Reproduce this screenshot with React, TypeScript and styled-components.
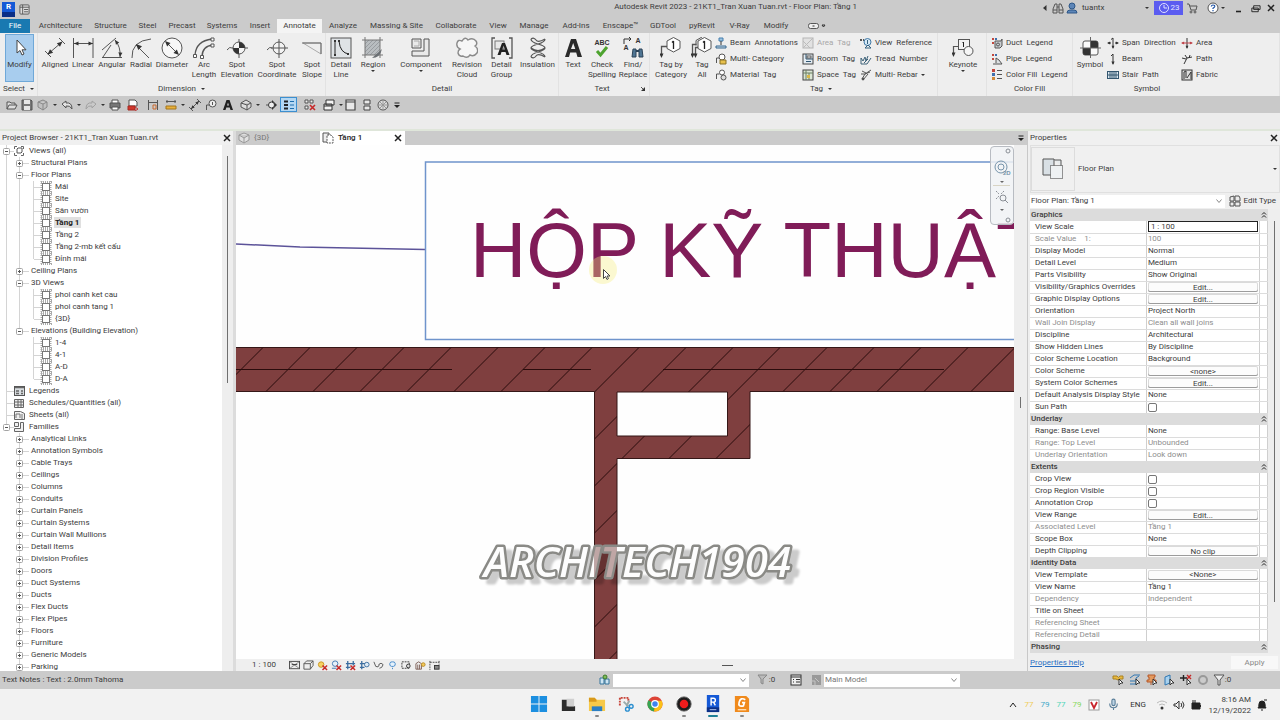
import React from "react";
import styled, { createGlobalStyle, css } from "styled-components";

const GlobalStyle = createGlobalStyle`
  *, *::before, *::after { box-sizing: border-box; }
  html, body { margin: 0; padding: 0; }
  body {
    font-family: Roboto, "Liberation Sans", sans-serif;
    font-size: 8px;
    line-height: 10px;
    color: #3c3c3c;
    background: #ececec;
  }
  button, input, select { font: inherit; color: inherit; margin: 0; padding: 0; }
  ul { list-style: none; margin: 0; padding: 0; }
`;

/* ---------- icons ---------- */

const Svg = styled.svg<{ $w?: number; $h?: number }>`
  display: block;
  flex: none;
  width: ${(p) => p.$w ?? 12}px;
  height: ${(p) => p.$h ?? p.$w ?? 12}px;
  fill: none;
  stroke: #555;
  stroke-width: 1;
`;

const Head = ({ x, y, a, s = 1, c = "#333" }: { x: number; y: number; a: number; s?: number; c?: string }) => (
  <path d="M0 0L-4.5-2v4z" fill={c} stroke="none" transform={`translate(${x} ${y}) rotate(${a}) scale(${s})`} />
);

const hexTag = (
  <>
    <path d="M13.500 .500l6.500 3.500v7.500l-6.500 3.500l-6.500-3.500v-7.500z" fill="#fff" />
    <path d="M13.500 4v8M12 5.500l1.500-1.500" stroke="#222" strokeWidth="1.300" />
  </>
);

const big: Record<string, React.ReactNode> = {
  modify: <path d="M8 3v13l3-2.500 2 4.500 2-1-2-4.200h4z" fill="#fff" stroke="#444" />,
  aligned: <><path d="M4 17L18 5M1 14l6 6M15 1l6 6" /><Head x={3.5} y={17.5} a={139} s={1.2} /><Head x={18.5} y={4.5} a={-41} s={1.2} /></>,
  linear: <><path d="M1.500 1v20M21 1v20M2 6.500h19" /><Head x={2} y={6.5} a={180} /><Head x={21} y={6.5} a={0} /></>,
  angular: <><path d="M1 20.500h20M1 13L15 1M2 20L10 8M14 3q6 7 5 17" /><Head x={14} y={3} a={-125} /><Head x={19} y={20} a={95} /></>,
  radial: <><path d="M2 21Q1 4 21 2M6 8l13 13" /><Head x={6} y={7} a={225} s={1.3} /></>,
  diameter: <><circle cx="11" cy="11" r="10" fill="#f8f8f8" /><path d="M5 5l12 12" /><Head x={4} y={4} a={225} s={1.2} /><Head x={18} y={18} a={45} s={1.2} /></>,
  arc: <><path d="M2 18Q3 4 19 2M9 20Q9 9 20 8" strokeWidth="1.300" /><path d="M.500 17.500h3v3h-3zM7.500 18.500h3v3h-3zM18 1h3v3h-3zM18 7h3v3h-3z" fill="#fff" /></>,
  elevation: <><path d="M1 13q3-4 5-2M6 11h16M13 2v19" /><circle cx="13" cy="11" r="6" fill="#f4f4f4" /><path d="M13 11V5a6 6 0 0 1 6 6zM13 11v6a6 6 0 0 1-6-6z" fill="#333" stroke="none" /></>,
  coordinate: <><path d="M1 13q3-4 5-2" /><circle cx="13" cy="11" r="6" fill="#f4f4f4" /><path d="M5 11h17M13 2v19" /></>,
  slope: <><path d="M20 17L2 6h18z" stroke="#aaa" /><path d="M1 6h19v11" stroke="#666" /></>,
  line: <><rect x="1" y="1" width="20" height="20" fill="#dfe3e6" stroke="#555" /><path d="M5 4v13M9 4q1 12 10 13" stroke="#222" /><path d="M4 3h2v2h-2zM4 17h2v2h-2zM8 3h2v2h-2zM17 16h2v2h-2z" fill="#333" stroke="none" /></>,
  region: <><rect x="3" y="3" width="15" height="15" fill="#b9bdc0" stroke="none" /><path d="M3 7l4-4M3 11l8-8M3 15l12-12M4 18L18 4M8 18L18 8M12 18l6-6" stroke="#999da1" /><path d="M3 0v21M18 0v21M0 3h21M0 18h21" stroke="#777" /><path d="M10 21q8 0 10-9z" fill="#6b7074" stroke="none" /></>,
  component: <><path d="M2 2h9v9h-9z" fill="#e9e9e9" /><path d="M14 2h5v17h-17v-5h12z" fill="#e9e9e9" /><path d="M4 4h5v5h-5" stroke="#aaa" /></>,
  cloud: <path d="M6 4q3-5 6-1q5-3 8 1q2 3-1 5q4 3 2 7q-3 4-7 2q-3 4-7 1q-4 1-5-3q0-3 2-4q-4-2-3-6q1-4 5-2z" fill="#f6f6f6" stroke="#8a8a8a" strokeWidth="1.400" />,
  group: <><path d="M4 1h-3v20h3M18 1h3v20h-3" strokeWidth="1.300" /><rect x="4" y="4" width="9" height="8" fill="#e8e8e8" stroke="#777" /><path d="M6.500 18L11 6h3l4.500 12h-3l-1-3h-4l-1 3zM11.300 12.500h2.600l-1.300-4z" fill="#222" stroke="none" fillRule="evenodd" /></>,
  insulation: <path d="M4 2q0 3 7 5t7 4q0 2-7 4t-7 5M18 2q0 3-7 5t-7 4q0 2 7 4t7 5M4 2q3-2 5 1t9-1M4 20q3 2 5-1t9 1M4 11q7 5 14 0" strokeWidth="1.200" />,
  text: <path d="M3 20L9 2h5l6 18h-4.500l-1.300-4.500h-6L7 20zM9 12h4.300L11.200 6z" fill="#2a2a2a" stroke="none" fillRule="evenodd" />,
  spell: <path d="M6 14l3.500 4L16 10" stroke="#4da32f" strokeWidth="3" />,
  find: <><path d="M2 7V2h7M7 0l2 2-2 2" stroke="#333" /><path d="M11 12h3v8h-4zM17 12h3l1 8h-4z" fill="#4f7593" stroke="#2c4357" /><path d="M14 14h3" stroke="#2c4357" strokeWidth="2" /></>,
  tagCategory: <><path d="M1.500 19V9.500h6" strokeWidth="1.300" /><Head x={1.5} y={21} a={90} />{hexTag}</>,
  tagAll: <><path d="M1.500 19V7.500h4M4.500 19V10.500h3" strokeWidth="1.300" /><path d="M11 0L5 3.500v5" /><Head x={1.5} y={21} a={90} /><Head x={4.5} y={21} a={90} />{hexTag}</>,
  keynote: <><path d="M1.500 18V9.500h5" strokeWidth="1.200" /><Head x={1.5} y={20} a={90} /><rect x="6.500" y="2.500" width="11" height="10" fill="#f2f2f2" /><circle cx="16.500" cy="14" r="4.500" fill="#f6f6f6" /><path d="M11.500 5v5M10.500 6l1-1" stroke="#222" /></>,
  symbol: <><rect x="4" y="4" width="15" height="14" rx="2" fill="#fafafa" stroke="#555" /><path d="M11.500 11V4h5.500q2 0 2 2v5zM11.500 11v7H6q-2 0-2-2v-5z" fill="#333" stroke="none" /><path d="M1 11h21M11.500 0v21" stroke="#666" /></>,
};

const redCross = <path d="M6 6l5 5M11 6l-5 5" stroke="#c62828" strokeWidth="1.600" />;
const pointer = <path d="M7 5v6l2-2h2z" fill="#fff" stroke="#333" />;

const small: Record<string, React.ReactNode> = {
  beam: <><path d="M4 1h4v3H4z" fill="#9cc3e0" stroke="#447fae" /><path d="M6 4v4" stroke="#333" /><path d="M1 9h10v2H1z" fill="#c9dbe8" stroke="#35678f" /></>,
  multiCat: <><path d="M1.500 10V5h3" /><circle cx="7" cy="4" r="3" fill="#fff" /><path d="M5 7h6v4H5z" fill="#e7c04c" stroke="#8a7226" /></>,
  material: <><path d="M1.500 10V5h3" /><circle cx="7" cy="3.500" r="2.500" fill="#fff" /><circle cx="8.500" cy="8.500" r="2.500" fill="#ddd" /></>,
  areaTag: <><rect x="1" y="1" width="10" height="10" stroke="#b5b5b5" fill="#e2e2e2" /><path d="M1 11L11 1M1 4l7 7" stroke="#bbb" /></>,
  roomTag: <><rect x="1" y="1" width="10" height="10" fill="#e4ecf2" stroke="#444" /><path d="M4 1v5h7M4 8.500h5" stroke="#2f5673" /><rect x="5" y="3" width="4" height="2" fill="#fff" /></>,
  spaceTag: <><rect x="1" y="1" width="10" height="10" fill="#dbe6d4" stroke="#444" /><path d="M4 1v10M1 4h10M7 4v7" stroke="#6a7f62" /><rect x="5" y="6" width="3" height="3" fill="#d9b948" stroke="none" /></>,
  viewRef: <><path d="M0 3h4" strokeWidth="2" strokeDasharray="2 1" /><circle cx="7.500" cy="5" r="3.500" fill="#d6e8f5" stroke="#3f78a4" /><path d="M7.500 3v4M8 8l3 3H5z" stroke="#33617f" /></>,
  tread: <path d="M1 11V5l2 3 2-4 1 4 2-5M1 11h6l4-6M4 10l4-4" stroke="#3d6279" />,
  rebar: <><path d="M2 2l4 2M1 5h4l6-4M2 10l3-5 5-2M3 11l5-6" /><circle cx="3" cy="10" r="1" fill="#333" /></>,
  duct: <><path d="M1 1h2v2H1zM1 5h2v2H1z" fill="#c2463c" stroke="none" /><path d="M4 1h2v2H4z" fill="#3e6fae" stroke="none" /><path d="M4 4h6l1-2v7l-2 2H4z" fill="#c9cdd0" /><circle cx="7" cy="7.500" r="1.500" /></>,
  pipe: <><path d="M1 1h2v2H1zM1 5h2v2H1z" fill="#c2463c" stroke="none" /><path d="M4 1h2v2H4z" fill="#3e6fae" stroke="none" /><path d="M2 11h9L8 7 5 5v5" fill="#dde1e3" /></>,
  legend: <><path d="M1 0h3v3H1z" fill="#c2463c" stroke="none" /><path d="M1 4h3v3H1z" fill="#3e6fae" stroke="none" /><path d="M1 8h3v3H1z" fill="#d08938" stroke="none" /><path d="M6 1.500h5M6 5.500h5M6 9.500h5" /></>,
  span: <><path d="M1 6h3M8 6h3M6 1v10M4 2.500l2-1.500" stroke="#333" /><Head x={0} y={6} a={180} s={0.7} /><Head x={12} y={6} a={0} s={0.7} /><Head x={6} y={12} a={90} s={0.7} /></>,
  beamSys: <><path d="M6 1v10M4 3l2-2" stroke="#333" /><Head x={6} y={12} a={90} s={0.8} /></>,
  stair: <><rect x="0.500" y="2.500" width="11" height="7" fill="#dce8f1" stroke="#33566f" /><path d="M3 3v6M5 3v6M7 3v6M9 3v6M1 6h10" stroke="#33566f" /></>,
  area: <><path d="M6 1v10" stroke="#333" /><path d="M1 6h10" stroke="#c0444a" /><Head x={0} y={6} a={180} s={0.7} c="#c0444a" /><Head x={12} y={6} a={0} s={0.7} c="#c0444a" /><Head x={6} y={12} a={90} s={0.7} /></>,
  path: <path d="M3 11l3-6 5-1M4 2l2 3M1 5l4 1M9 2l-1 3" stroke="#333" />,
  fabric: <><rect x="1" y="1" width="10" height="10" fill="#ddd" stroke="#333" /><path d="M3 10V3l2-1v7M6 9l4-6v7" stroke="#333" /></>,

  open: <path d="M1 10V3h3l1 1h4v2M1 10l2-4h8l-2 4z" fill="#ddd" />,
  save: <><path d="M1 1h9l1 1v9H1z" fill="#777" /><path d="M3 1h6v4H3zM3 7h6v4H3z" fill="#e6e6e6" stroke="none" /></>,
  cubeSync: <path d="M6 1l4 2v5l-4 3-5-3V3zM1 3l5 2 4-2M6 5v6" stroke="#888" fill="#c0c0c0" />,
  undo: <path d="M1 5l4-3v2q6-1 6 6-2-4-6-3v2z" fill="#e3e3e3" />,
  redo: <path d="M11 5L7 2v2q-6-1-6 6 2-4 6-3v2z" stroke="#a2a2a2" />,
  print: <><path d="M3 4V1h6v3" fill="#fff" /><path d="M1 4h10v5H1z" fill="#777" /><path d="M3 8h6v3H3z" fill="#fff" /></>,
  pdf: <><path d="M2 1h6l2 2v4H2z" fill="#fff" /><path d="M1 7h7v4H1z" fill="#d2372c" stroke="#a52b22" /><path d="M8 8l3 2-3 2" stroke="#b33" /></>,
  measureDim: <><path d="M1.500 1v10M10.500 1v10M2 3.500h8" /><path d="M6 6h3v4H6z" stroke="#c8692c" /></>,
  measure: <><path d="M1 2.500h10M2 1v3M10 1v3" /><path d="M1 7h10v3H1z" fill="#e9b13a" stroke="#a3741c" /></>,
  alignedSm: <><path d="M2 10l8-8M0 8l4 4M8 0l4 4" /><Head x={10} y={2} a={-45} s={0.8} /><Head x={2} y={10} a={135} s={0.8} /></>,
  tagSm: <><path d="M1.500 11V6h3" /><circle cx="7.500" cy="4.500" r="3.500" fill="#eee" /><path d="M7.500 3v3" /></>,
  textSm: <path d="M1 11L4.500 1h3L11 11H8.500l-.8-2.500H4.300L3.500 11zM5 6.500h2L6 3.500z" fill="#222" stroke="none" fillRule="evenodd" />,
  house: <path d="M1 4l5-3 5 3v4l-4 3-6-3zM1 4l6 2 4-2M7 6v5" fill="#ddd" />,
  section: <><path d="M6 1l5 5-5 5z" fill="#333" stroke="none" /><circle cx="5.500" cy="6" r="3" fill="#eee" stroke="#333" /><path d="M0 6h2" /></>,
  thin: <><path d="M1 2.500h4M1 6h4M1 9.500h4" strokeWidth="2" stroke="#222" /><path d="M7 2.500h4M7 6h4M7 9.500h4" stroke="#1e6fae" /></>,
  closeHidden: <><path d="M1 1h3v3H1zM6 1h3v3H6zM1 7h3v3H1z" fill="#eee" />{redCross}</>,
  switchWin: <path d="M3 1h8v5H3zM1 5h8v6H1zM1 7h8" fill="#f4f4f4" stroke="#333" />,
  window: <path d="M1 1h9v10H1zM1 3h9" fill="#e8e8e8" stroke="#444" strokeWidth="1.200" />,
  stack: <path d="M3 1h6v4H3zM3 7h6v4H3z" fill="#e8e8e8" stroke="#444" />,
  render: <><circle cx="6" cy="6" r="5" fill="#ddd" /><path d="M3 3l6 6M9 3L3 9M6 1v10M1 6h10" stroke="#999" /></>,
  customize: <><path d="M3.500 4h5" stroke="#222" /><path d="M3 6h6L6 9z" fill="#222" stroke="none" /></>,

  planTab: <><path d="M1 1h6v9H1z" fill="#eee" /><path d="M5 3h4l2 2v6H5z" fill="#fff" strokeDasharray="2 1" /></>,
  cube: <path d="M6 1l5 2v5l-5 3-5-3V3zM1 3l5 3 5-3M6 6v5" stroke="#999" fill="#e0e0e0" />,
  type: <path d="M1 2l4-1v5H1zM6 1h4l1 2v3H6zM1 7h4v4H1zM6 7h5v4H6z" fill="#ececec" />,

  vcDetail: <><rect x="0.500" y="1.500" width="11" height="8" fill="#eee" stroke="#444" /><path d="M1 2l10 7M11 2L1 9" stroke="#888" /><path d="M3 5h6" stroke="#333" /></>,
  vcStyle: <path d="M1 4l3-3h7v5l-3 4H1zM1 4h7l3-3M8 4v6" fill="#eee" />,
  vcSun: <><circle cx="4.500" cy="5" r="3" fill="#f6d264" stroke="#c99520" />{redCross}</>,
  vcShadow: <><circle cx="4.500" cy="4" r="3" stroke="#3f78b4" fill="#e7f1fa" /><path d="M1 9h5" stroke="#3f78b4" />{redCross}</>,
  vcCrop: <><path d="M3 1v9M1 4h10M9 1v5M1 8h5" stroke="#3a6c9f" strokeWidth="1.400" />{redCross}</>,
  vcCropOn: <><path d="M3 1v9M1 4h6M1 8h5" stroke="#3a6c9f" strokeWidth="1.400" /><circle cx="8.500" cy="5" r="2.500" fill="#dcebf7" stroke="#3a6c9f" /></>,
  vcGlasses: <path d="M1 2l2 5q3 2 4-2M6 5q3-3 5 0-1 4-4 4" />,
  vcBulb: <path d="M6 8.500V10M6 2a2.500 2.500 0 0 1 1 5H5a2.500 2.500 0 0 1 1-5z" stroke="#3f86c8" fill="#e5f2fc" />,
  vcTemp: <><path d="M1 2h8v7H1z" strokeDasharray="2 1" stroke="#333" /><circle cx="8" cy="6.500" r="2" fill="#ddd" stroke="#333" /></>,
  vcAnalytic: <><path d="M1 10V4l3-2 3 2v6zM3 5v5M5 5v5" stroke="#7a5b52" /><circle cx="9" cy="5" r="2" fill="#f3c95c" stroke="#b98a22" /></>,
  vcConstraint: <><path d="M1 1v10M1 2.500h10M11 1v4" stroke="#444" strokeDasharray="2 1" /><rect x="6" y="6" width="5" height="4" fill="#888" stroke="#333" /></>,

  workset: <><path d="M2 4h4v6H2zM7 5h4v5H7z" fill="#cfe6f3" stroke="#32729a" /><circle cx="7" cy="3" r="2" fill="#7dbb5a" stroke="#3c7a28" /></>,
  funnelGray: <path d="M1 1h9L6 5v5l-2-1V5z" fill="#bbb" stroke="#888" />,
  options: <><rect x="1" y="1" width="10" height="10" fill="#eee" stroke="#333" /><path d="M1 3h10M3 5.500h1M3 8h1M6 5.500h4M6 8h4" stroke="#333" /></>,
  optionsOff: <><path d="M2 1h9v10H2z" fill="#999" stroke="none" /><path d="M1 7h4v4M5 4l4 4" stroke="#c4c4c4" /></>,
  selLinks: <><path d="M1 2h4q1 3 3 0h3v3H8q-2 2-4 0H1z" fill="#e9b93e" stroke="#a98120" />{pointer}</>,
  selUnder: <><path d="M1 4l4-3h6M1 7h5M1 10h6V4l3-2" stroke="#2f77b3" />{pointer}</>,
  selPin: <><path d="M2 1h7v2H8v3h2v2H1V6h2V3H2zM5 8v3" fill="#e39a5f" stroke="#b5592b" />{pointer}</>,
  selFace: <><path d="M2 3l5-2v8l-5 2z" fill="#a8d1ee" stroke="#2f77b3" />{pointer}</>,
  selDrag: <><path d="M0 4h7M3.500 1v6" stroke="#222" strokeWidth="1.400" /><path d="M7 1l4 4M11 1L7 5" stroke="#c62828" strokeWidth="1.400" />{pointer}</>,
  gear: <circle cx="6" cy="6" r="4" stroke="#999" strokeWidth="2" />,
  funnel: <path d="M1 1h10L7 6v5H5V6z" fill="#eee" />,

  binoc: <path d="M1 11V7l2-5h2v9zM7 11V2h2l2 5v4zM5 5h2M1 8h4M7 8h4" />,
  user: <><circle cx="6" cy="4" r="3" fill="#5d86b8" stroke="#2e5788" /><path d="M1 11q0-3 3-3h4q3 0 3 3z" fill="#5d86b8" stroke="#2e5788" /></>,
  clock: <><circle cx="6" cy="6" r="4.500" stroke="#dfe1ff" /><path d="M6 3v3h3" stroke="#dfe1ff" /></>,
  cart: <><path d="M1 2h2l2 6h5l1-4H4" /><circle cx="5" cy="10" r="1" /><circle cx="9" cy="10" r="1" /></>,
  help: <><circle cx="6" cy="6" r="5" fill="#fff" stroke="#555" /><path d="M4.300 4.500Q4.500 3 6 3q2 0 1.700 1.700Q7.500 5.500 6 6.300V7M6 8v1.200" stroke="#1b50a4" strokeWidth="1.200" /></>,
  minimize: <path d="M3 9.500h5" stroke="#222" strokeWidth="1.600" />,
  restore: <path d="M4 3h7v4H4zM2 5.500h7v4H2z" fill="#cbcbcb" stroke="#222" />,
  close: <path d="M3 3l6 6M9 3l-6 6" stroke="#222" strokeWidth="1.500" />,
  list: <><rect x="1" y="1" width="10" height="10" rx="1" fill="#ddd" /><path d="M4 1v10M1 3.500h10M5.500 6H10M5.500 8.500H10" /></>,

  wifi: <><path d="M1 4q5-4 10 0M3 6q3-2 6 0" stroke="#bbb" /><circle cx="6" cy="9" r="1.500" fill="#333" stroke="none" /></>,
  sound: <path d="M1 5h2l3-3v8L3 7H1zM8 4q1.500 2 0 4M9.500 2.500q3 3.500 0 7" stroke="#333" />,
  battery: <><path d="M2 4h8v6H2z" fill="#222" stroke="#222" /><path d="M10.500 6v2M3 1v3M5 1v3" stroke="#222" /></>,
  mic: <><rect x="4.500" y="1" width="3" height="6" rx="1.500" fill="#bcd3e4" stroke="#5a7e99" /><path d="M2.500 5q0 4 3.500 4t3.500-4M6 9v2" stroke="#5a7e99" /></>,
  bell: <path d="M2 9q1-1 1-4 0-3 3-3t3 3q0 3 1 4zM5 11h2M8 1h3" fill="#222" stroke="#222" />,
  viet: <><rect x="1" y="1" width="10" height="10" fill="#fff" stroke="#999" /><path d="M3 3l3 6 3-6" stroke="#c8252c" strokeWidth="1.800" /></>,
};

const Icon = ({ name, size = 12 }: { name: string; size?: number }) => (
  <Svg $w={size} viewBox="0 0 12 12" aria-hidden="true">{small[name]}</Svg>
);

const Caret = styled.span`
  flex: none;
  width: 0;
  height: 0;
  border: 2px solid transparent;
  border-top: 2px solid #333;
  border-bottom: 0;
`;

/* ---------- frame ---------- */

const Shell = styled.div`
  height: 100vh;
  display: flex;
  flex-direction: column;
  overflow: hidden;
`;

const PlainButton = styled.button`
  border: 0;
  background: none;
  display: flex;
  align-items: center;
  justify-content: center;
`;

const TitleBar = styled.header`
  height: 19px;
  flex: none;
  display: flex;
  align-items: center;
  background: #cbcbcb;
  padding: 0 2px;
`;

const AppBadge = styled.span`
  width: 13px;
  height: 15px;
  background: linear-gradient(#1559d6 70%, #0b2f86 70%);
  color: #fff;
  font-weight: 700;
  text-align: center;
`;

const DocTitle = styled.h1`
  flex: 1;
  margin: 0;
  padding: 0 183px 5px 0;
  font-size: 8px;
  font-weight: 400;
  line-height: 12px;
  text-align: right;
  white-space: nowrap;
`;

const TitleTools = styled.div`
  width: 238px;
  display: flex;
  align-items: center;
  padding-bottom: 3px;
`;

const ToolSlot = styled(PlainButton)<{ $w: number }>`
  width: ${(p) => p.$w}px;
  height: 14px;
  flex: none;
  gap: 2px;
`;

const UserSlot = styled(PlainButton)`
  flex: 1;
  justify-content: flex-start;
  gap: 4px;
`;

const TrialBadge = styled(PlainButton)`
  width: 29px;
  height: 14px;
  background: #5b5cf0;
  color: #e4e5ff;
  gap: 1px;
`;

const TabBar = styled.nav`
  height: 14px;
  flex: none;
  display: flex;
  background: #cbcbcb;
`;

const RibbonTab = styled(PlainButton)<{ $w: number; $kind?: "file" | "active" }>`
  width: ${(p) => p.$w}px;
  flex: none;
  white-space: nowrap;
  ${(p) => p.$kind === "file" && css`background: #1979b1; color: #fff; margin-right: 2px;`}
  ${(p) => p.$kind === "active" && css`background: #f4f4f4;`}
`;

const Ribbon = styled.section`
  height: 63px;
  flex: none;
  display: flex;
  background: #eeeeee;
`;

const Panel = styled.div<{ $w?: number }>`
  ${(p) => (p.$w ? css`width: ${p.$w}px; flex: none;` : css`flex: 1; border-right: 0;`)}
  display: flex;
  flex-direction: column;
  border-right: 1px solid #e2e2e2;
`;

const PanelBody = styled.div<{ $pad: number }>`
  height: 50px;
  padding-left: ${(p) => p.$pad}px;
  display: flex;
  align-items: flex-start;
`;

const PanelName = styled.div<{ $w?: number }>`
  width: ${(p) => (p.$w ? `${p.$w}px` : "auto")};
  height: 12px;
  display: flex;
  align-items: center;
  justify-content: center;
  gap: 5px;
`;

const NameSide = styled.span`
  flex: 1;
  display: flex;
  justify-content: flex-end;
`;

const BigButton = styled(PlainButton)<{ $w: number; $active?: boolean }>`
  width: ${(p) => p.$w}px;
  flex: none;
  height: 48px;
  flex-direction: column;
  justify-content: flex-start;
  align-items: center;
  padding-top: 3px;
  margin-top: 1px;
  white-space: pre;
  text-align: center;
  ${(p) => p.$active && css`background: #a8cdee; outline: 1px solid #6fa8d8; outline-offset: -1px;`}
`;

const Label = styled.span`
  display: block;
  padding-top: 1px;
`;

const SmallColumn = styled.div<{ $w: number }>`
  width: ${(p) => p.$w}px;
  flex: none;
  padding-top: 2px;
`;

const SmallButton = styled(PlainButton)`
  height: 16px;
  gap: 3px;
  white-space: pre;
  &:disabled { color: #a8a8a8; }
`;

const QuickBar = styled.div`
  height: 17px;
  flex: none;
  display: flex;
  align-items: center;
  padding-left: 4px;
  background: #c9c9c9;
`;

const QuickSlot = styled(PlainButton)<{ $w: number; $on?: boolean }>`
  width: ${(p) => p.$w}px;
  height: 15px;
  flex: none;
  gap: 4px;
  ${(p) => p.$on && css`background: #b5d8f3; border: 1px solid #3c8fd0;`}
`;

const OptionsBar = styled.div`
  height: 18px;
  flex: none;
  background: #ececec;
  border-bottom: 2px solid #dfe6da;
`;

const Workspace = styled.main`
  flex: 1;
  min-height: 0;
  display: flex;
`;

/* ---------- project browser ---------- */

const Browser = styled.aside`
  width: 236px;
  flex: none;
  display: flex;
  flex-direction: column;
  background: #ececec;
  border-right: 3px solid #dcdcdc;
`;

const DockHeader = styled.div`
  height: 14px;
  flex: none;
  display: flex;
  align-items: center;
  justify-content: space-between;
  padding-left: 2px;
  background: #f0f0f0;
`;

const BrowserBody = styled.div`
  flex: 1;
  min-height: 0;
  display: flex;
`;

const Tree = styled.ul`
  flex: 1;
  overflow: hidden;
  background: #fff;
`;

const TreeRow = styled.li<{ $current?: boolean }>`
  height: 12px;
  display: flex;
  align-items: flex-start;
  white-space: nowrap;
  ${(p) => p.$current && css`font-weight: 700; color: #222;`}
`;

const TreeText = styled.span<{ $current?: boolean }>`
  padding: 0 2px 0 1px;
  line-height: 11px;
  ${(p) => p.$current && css`background: #e0e0e0;`}
`;

const Rail = styled.div<{ $w: number; $top: number }>`
  width: ${(p) => p.$w}px;
  flex: none;
  padding-top: ${(p) => p.$top}px;
  display: flex;
  justify-content: center;
  background: #eeeeee;
`;

const Thumb = styled.span<{ $h: string }>`
  width: 1px;
  height: ${(p) => p.$h};
  background: #6f6f6f;
`;

type Node = { d: 0 | 1 | 2; t: string; s?: "+" | "-"; i?: string; cur?: boolean; last?: boolean };
const kids = (names: string[], cur?: string): Node[] =>
  names.map((t, k) => ({ d: 2, t, i: "view", cur: t === cur, last: k === names.length - 1 }));

const nodes: Node[] = [
  { d: 0, t: "Views (all)", s: "-", i: "views" },
  { d: 1, t: "Structural Plans", s: "+" },
  { d: 1, t: "Floor Plans", s: "-" },
  ...kids(["Mái", "Site", "Sân vườn", "Tầng 1", "Tầng 2", "Tầng 2-mb kết cấu", "Đỉnh mái"], "Tầng 1"),
  { d: 1, t: "Ceiling Plans", s: "+" },
  { d: 1, t: "3D Views", s: "-" },
  ...kids(["phoi canh ket cau", "phoi canh tang 1", "{3D}"]),
  { d: 1, t: "Elevations (Building Elevation)", s: "-", last: true },
  ...kids(["1-4", "4-1", "A-D", "D-A"]),
  { d: 0, t: "Legends", i: "legends" },
  { d: 0, t: "Schedules/Quantities (all)", i: "table" },
  { d: 0, t: "Sheets (all)", i: "sheets" },
  { d: 0, t: "Families", s: "-", i: "families", last: true },
  ...["Analytical Links", "Annotation Symbols", "Cable Trays", "Ceilings", "Columns", "Conduits", "Curtain Panels",
    "Curtain Systems", "Curtain Wall Mullions", "Detail Items", "Division Profiles", "Doors", "Duct Systems", "Ducts",
    "Flex Ducts", "Flex Pipes", "Floors", "Furniture", "Generic Models", "Parking"].map((t): Node => ({ d: 1, t, s: "+" })),
];

const treeIcons: Record<string, React.ReactNode> = {
  views: <><path d="M14.500 4V1.500H17M21 1.500h2.500V4M23.500 8v2.500H21M17 10.500h-2.500V8" stroke="#666" /><path d="M17 4l1-1h4v4l-1 1h-4z" stroke="#555" /></>,
  view: <><path d="M41 1h11M41 11h11M41.500 0v12M50.500 0v12" stroke="#aaa" strokeWidth="2" strokeDasharray="1 1" /><rect x="42.500" y="2.500" width="7" height="7" fill="#fff" stroke="#777" /></>,
  legends: <><rect x="14.500" y="1.500" width="10" height="9" fill="#d8dde0" stroke="#555" /><path d="M15 2.500h9M16 6h3M16 8.500h3M21 6h2M21 8.500h2" stroke="#666" strokeWidth="1.500" /></>,
  table: <path d="M14.500 2.500h9v8h-9zM15 5h9M15 8h9M18 3v7M21 3v7" fill="#f0f0f0" stroke="#666" />,
  sheets: <><path d="M14.500 2.500h6l4 2v6h-10z" fill="#f0f0f0" stroke="#666" /><path d="M16 9V5h4v4M22 5v5" stroke="#777" /></>,
  families: <path d="M14.500 1.500h4v4h-4zM20.500 1.500h3v9h-9v-3h6z" fill="#f0f0f0" stroke="#666" />,
};

const glyphWidth = [28, 30, 54];

const TreeGlyph = ({ n, families, openBranch }: { n: Node; families: boolean; openBranch: boolean }) => {
  const bx = n.d === 0 ? 3.5 : 16.5;
  return (
    <Svg $w={glyphWidth[n.d]} $h={12} viewBox={`0 0 ${glyphWidth[n.d]} 12`} aria-hidden="true">
      <g stroke="#d4d4d4">
        {!families && <path d="M6.500 0v12" />}
        {families && n.d === 0 && <path d="M6.500 0v6" />}
        {n.d === 0 && <path d="M7 6.500h7" />}
        {n.d === 1 && <path d={`M19.500 0V${n.last ? 6 : 12}M20 6.500h9`} />}
        {n.d === 2 && <path d={`M33.500 0V${n.last ? 6 : 12}M34 6.500h7${openBranch ? "M19.500 0v12" : ""}`} />}
      </g>
      {n.s && (
        <>
          <rect x={bx} y="3.500" width="6" height="6" rx="1" fill="#fff" stroke="#a4a4a4" />
          <path d={`M${bx + 1.5} 6.500h3${n.s === "+" ? `M${bx + 3} 5v3` : ""}`} stroke="#555" />
        </>
      )}
      {n.i && treeIcons[n.i]}
    </Svg>
  );
};

/* ---------- drawing view ---------- */

const ViewArea = styled.section`
  flex: 1;
  min-width: 0;
  display: flex;
  flex-direction: column;
  background: #efefef;
`;

const DocTabs = styled.div`
  height: 14px;
  flex: none;
  display: flex;
  align-items: center;
  background: #cbcbcb;
`;

const DocTab = styled(PlainButton)<{ $active?: boolean }>`
  width: ${(p) => (p.$active ? 85 : 84)}px;
  height: 14px;
  flex: none;
  justify-content: flex-start;
  gap: 4px;
  padding: 0 1px 0 2px;
  color: #777;
  ${(p) => p.$active && css`background: #fff; color: #222; font-weight: 500;`}
`;

const PushEnd = styled.span`
  margin-left: auto;
  display: flex;
  align-items: center;
`;

const CanvasRow = styled.div`
  flex: 1;
  min-height: 0;
  display: flex;
`;

const CanvasBox = styled.div`
  position: relative;
  flex: 1;
  min-width: 0;
  background: #fefefe;
  overflow: hidden;
`;

const Drawing = styled.svg`
  display: block;
  width: 100%;
  height: 100%;
`;

const NoteText = styled.text`
  font-family: "Liberation Sans", Arial, sans-serif;
  font-size: 78px;
  fill: #801c58;
`;

const Watermark = styled.text`
  font-family: "Open Sans", "DejaVu Sans", sans-serif;
  font-size: 42px;
  font-weight: 600;
  font-style: italic;
  fill: url(#mark);
  stroke: #8a8a86;
  stroke-width: 5px;
  stroke-linejoin: round;
  paint-order: stroke;
  filter: drop-shadow(7px 5px 1px rgba(0, 0, 0, 0.2));
`;

const NavBar = styled.div`
  position: absolute;
  top: 1px;
  right: 0;
  width: 24px;
  height: 79px;
  border: 1px solid #b8bcc2;
  border-radius: 4px;
  background: rgba(240, 242, 245, 0.85);
`;

const NavText = styled.text`
  font: 700 6px "Liberation Sans", sans-serif;
  fill: #7694ab;
  stroke: none;
`;

const ViewControls = styled.div`
  height: 12px;
  flex: none;
  display: flex;
  align-items: center;
  padding-left: 16px;
`;

const ScaleButton = styled(PlainButton)`
  width: 35px;
  justify-content: flex-start;
`;

const VcButton = styled(PlainButton)`
  width: 14px;
  height: 12px;
`;

const HThumb = styled.span`
  width: 11px;
  height: 1px;
  margin-left: 281px;
  background: #555;
`;

const wallShape = "M230 347.500H1020V391.500H750V458.500H617V665H594.500V391.500H230zM617 392V436H727.500V392z";
const hatchSums = Array.from({ length: 20 }, (_, k) => 563.5 + 47 * k);

const FloorPlanDrawing = () => (
  <Drawing viewBox="236 145 778 514" preserveAspectRatio="xMinYMin slice" role="img" aria-label="Floor plan Tầng 1">
    <defs>
      <clipPath id="wall"><path d={wallShape} clipRule="evenodd" /></clipPath>
      <linearGradient id="mark" gradientUnits="userSpaceOnUse" x1="482" x2="782" y1="0" y2="0">
        <stop offset="0.375" stopColor="#fdfdfd" />
        <stop offset="0.375" stopColor="#bfa6a5" />
        <stop offset="0.450" stopColor="#bfa6a5" />
        <stop offset="0.450" stopColor="#fdfdfd" />
      </linearGradient>
    </defs>
    <path d="M236 244L300 247L425 249.500" stroke="#5c5399" strokeWidth="1.500" fill="none" />
    <path d="M1030 162H425.500V339.500H1030" stroke="#6f94cc" strokeWidth="1.500" fill="none" />
    <NoteText x="470" y="277">HỘP KỸ THUẬT</NoteText>
    <path d={wallShape} fill="#7f3f3f" stroke="#351717" fillRule="evenodd" />
    <g clipPath="url(#wall)" stroke="#2b0c0c">
      {hatchSums.map((sum) => <path key={sum} d={`M${sum - 340} 340L${sum - 660} 660`} />)}
      <path d="M236 369.500H452M523 369.500H591M663 369.500H944" />
    </g>
    <circle cx="603" cy="270" r="14" fill="#f5ee7a" opacity="0.350" />
    <path d="M603.500 269.500v9l2-2 1.500 3 1.500-1-1.500-2.500h3z" fill="#fff" stroke="#444" />
    <Watermark x="484" y="577">ARCHITECH1904</Watermark>
  </Drawing>
);

/* ---------- properties ---------- */

const Props = styled.aside`
  width: 253px;
  flex: none;
  display: flex;
  flex-direction: column;
  background: #efefef;
  border-left: 1px solid #c8c8c8;
`;

const TypeSelector = styled.button`
  height: 48px;
  flex: none;
  display: flex;
  align-items: center;
  justify-content: flex-start;
  gap: 3px;
  margin: 0 0 0 2px;
  padding-right: 2px;
  border: 1px solid #e0e0e0;
  background: #f0f0f0;
  & > ${Caret} { margin-left: auto; }
`;

const TypeThumb = styled.span`
  width: 44px;
  height: 44px;
  display: flex;
  align-items: center;
  justify-content: center;
  border: 1px solid #dcdcdc;
`;

const InstanceRow = styled.div`
  height: 16px;
  flex: none;
  display: flex;
  align-items: center;
  padding: 0 4px 0 2px;
  gap: 4px;
`;

const SelectBox = styled.label<{ $w?: number }>`
  ${(p) => (p.$w ? css`width: ${p.$w}px;` : css`flex: 1;`)}
  height: 13px;
  display: flex;
  align-items: center;
  padding: 0 3px 0 1px;
  background: #fff;
`;

const Select = styled.select<{ $dim?: boolean }>`
  flex: 1;
  min-width: 0;
  appearance: none;
  border: 0;
  background: none;
  line-height: 12px;
  ${(p) => p.$dim && css`color: #777;`}
`;

const Chevron = () => (
  <Svg $w={6} viewBox="0 0 6 6" aria-hidden="true"><path d="M.500 1.500L3 4.500l2.500-3" stroke="#888" /></Svg>
);

const EditType = styled(PlainButton)`
  height: 14px;
  gap: 3px;
`;

const PropsBody = styled.div`
  flex: 1;
  min-height: 0;
  overflow: hidden;
  display: flex;
  padding-left: 2px;
`;

const Grid = styled.table`
  flex: 1;
  align-self: flex-start;
  border-collapse: collapse;
  table-layout: fixed;
  width: 100%;
  background: #fff;
`;

const NameCol = styled.col`
  width: 49%;
`;

const EndCol = styled.col`
  width: 8px;
`;

const GroupCell = styled.th`
  height: 12px;
  padding: 0 0 0 1px;
  text-align: left;
  font-weight: 500;
  line-height: 10px;
  background: #dcdcdc;
`;

const NameCell = styled.th<{ $dim?: boolean }>`
  height: 12px;
  padding: 0 0 0 5px;
  text-align: left;
  font-weight: 400;
  line-height: 10px;
  white-space: pre;
  border-right: 1px solid #cfcfcf;
  border-bottom: 1px solid #dcdcdc;
  ${(p) => p.$dim && css`color: #8e8e8e;`}
`;

const ValueCell = styled.td<{ $dim?: boolean }>`
  height: 12px;
  padding: 0 1px;
  line-height: 10px;
  white-space: nowrap;
  border-right: 1px solid #cfcfcf;
  border-bottom: 1px solid #dcdcdc;
  ${(p) => p.$dim && css`color: #8e8e8e;`}
`;

const CellButton = styled.button`
  display: block;
  width: 100%;
  height: 10px;
  line-height: 9px;
  border: 0;
  border-radius: 2px;
  background: #fcfcfc;
  box-shadow: inset 0 -1px 0 #9c9c9c, inset 0 0 0 1px #dadada;
`;

const CellInput = styled.input`
  display: block;
  width: 100%;
  height: 11px;
  padding: 0 2px;
  border: 1px solid #222;
  background: #fff;
`;

const Check = styled.input`
  display: block;
  appearance: none;
  width: 9px;
  height: 9px;
  margin: 1px 0 0;
  border: 1px solid #777;
  border-radius: 2px;
  background: #fff;
`;

const PropsFooter = styled.div`
  height: 17px;
  flex: none;
  display: flex;
  align-items: center;
  justify-content: space-between;
  padding: 0 2px;
`;

const HelpLink = styled.a`
  color: #2a6fc4;
`;

const Apply = styled.button`
  width: 47px;
  height: 13px;
  border: 0;
  background: #f8f8f8;
  &:disabled { color: #888; }
`;

type Kind = "text" | "dim" | "button" | "check" | "input";
const groups: { name: string; rows: [string, Kind, string?][] }[] = [
  { name: "Graphics", rows: [
    ["View Scale", "input", "1 : 100"], ["Scale Value    1:", "dim", "100"], ["Display Model", "text", "Normal"],
    ["Detail Level", "text", "Medium"], ["Parts Visibility", "text", "Show Original"],
    ["Visibility/Graphics Overrides", "button", "Edit..."], ["Graphic Display Options", "button", "Edit..."],
    ["Orientation", "text", "Project North"], ["Wall Join Display", "dim", "Clean all wall joins"],
    ["Discipline", "text", "Architectural"], ["Show Hidden Lines", "text", "By Discipline"],
    ["Color Scheme Location", "text", "Background"], ["Color Scheme", "button", "<none>"],
    ["System Color Schemes", "button", "Edit..."], ["Default Analysis Display Style", "text", "None"], ["Sun Path", "check"],
  ] },
  { name: "Underlay", rows: [
    ["Range: Base Level", "text", "None"], ["Range: Top Level", "dim", "Unbounded"], ["Underlay Orientation", "dim", "Look down"],
  ] },
  { name: "Extents", rows: [
    ["Crop View", "check"], ["Crop Region Visible", "check"], ["Annotation Crop", "check"], ["View Range", "button", "Edit..."],
    ["Associated Level", "dim", "Tầng 1"], ["Scope Box", "text", "None"], ["Depth Clipping", "button", "No clip"],
  ] },
  { name: "Identity Data", rows: [
    ["View Template", "button", "<None>"], ["View Name", "text", "Tầng 1"], ["Dependency", "dim", "Independent"],
    ["Title on Sheet", "text", ""], ["Referencing Sheet", "dim", ""], ["Referencing Detail", "dim", ""],
  ] },
  { name: "Phasing", rows: [] },
];

const Value = ({ name, kind, value }: { name: string; kind: Kind; value?: string }) => {
  if (kind === "button") return <CellButton aria-label={`${name}: ${value}`}>{value}</CellButton>;
  if (kind === "check") return <Check type="checkbox" aria-label={name} />;
  if (kind === "input") return <CellInput aria-label={name} defaultValue={value} />;
  return <>{value}</>;
};

/* ---------- status bar and taskbar ---------- */

const StatusBar = styled.footer`
  height: 18px;
  flex: none;
  display: flex;
  align-items: center;
  padding-left: 2px;
  background: #cbcbcb;
`;

const StatusHint = styled.span`
  width: 592px;
  flex: none;
`;

const StatusSlot = styled(PlainButton)<{ $w: number }>`
  width: ${(p) => p.$w}px;
  height: 14px;
  flex: none;
`;

const StatusTools = styled.div`
  margin-left: auto;
  padding-right: 47px;
  display: flex;
`;

const Taskbar = styled.footer`
  height: 31px;
  flex: none;
  display: grid;
  grid-template-columns: 1fr auto 1fr;
  align-items: center;
  background: #f2f2f2;
`;

const Apps = styled.div`
  grid-column: 2;
  display: flex;
  gap: 3px;
`;

const AppButton = styled(PlainButton)<{ $run?: string; $wide?: boolean }>`
  width: 26px;
  height: 28px;
  flex-direction: column;
  gap: 2px;
  padding-top: 3px;
  &::after {
    content: "";
    width: ${(p) => (p.$wide ? 10 : 4)}px;
    height: 2px;
    border-radius: 1px;
    background: ${(p) => p.$run ?? "transparent"};
  }
`;

const Tray = styled.div`
  justify-self: end;
  display: flex;
  align-items: center;
  padding-right: 11px;
`;

const TrayItem = styled(PlainButton)<{ $w: number; $c?: string }>`
  width: ${(p) => p.$w}px;
  height: 16px;
  color: ${(p) => p.$c ?? "#333"};
`;

const Clock = styled.time`
  width: 50px;
  text-align: right;
  line-height: 11px;
  padding-right: 4px;
`;

const apps: { name: string; run?: string; wide?: boolean; art: React.ReactNode }[] = [
  { name: "Start", art: <path d="M1 1h8v8H1zM10 1h8v8h-8zM1 10h8v8H1zM10 10h8v8h-8z" fill="#1c8fe0" stroke="none" /> },
  { name: "Task view", art: <><path d="M3 5h7v7h7v5H3z" fill="#2c2c2c" stroke="none" /><path d="M8 4h8v8H8z" fill="#d0d0d0" stroke="none" /></> },
  { name: "File Explorer", run: "#888", art: <><path d="M1 3h6l2 2h9v12H1z" fill="#f7c948" stroke="none" /><path d="M1 3h6l2 2v2H1z" fill="#d99a1c" stroke="none" /><path d="M4 12h11v5H4z" fill="#2b7fc4" stroke="none" /></> },
  { name: "Snipping Tool", art: <><path d="M3 11V3h9v5" stroke="#c8453a" strokeWidth="2" strokeDasharray="2 1" /><path d="M7 7l5 5M13 6l-3 6" stroke="#9aa" strokeWidth="2" /><circle cx="11" cy="15" r="2" stroke="#2b8fd0" strokeWidth="1.500" /><circle cx="15" cy="12" r="2" stroke="#2b8fd0" strokeWidth="1.500" /></> },
  { name: "Chrome", art: <><circle cx="9.500" cy="9.500" r="8" fill="#dd4437" stroke="none" /><path d="M9.500 9.500L2.500 5.500A8 8 0 0 0 8.500 17.400z" fill="#36a553" stroke="none" /><path d="M9.500 9.500L8.500 17.400A8 8 0 0 0 16.600 6h-7z" fill="#fbc117" stroke="none" /><circle cx="9.500" cy="9.500" r="3.500" fill="#3f83ee" stroke="#fff" strokeWidth="1.200" /></> },
  { name: "Recorder", run: "#888", art: <><circle cx="9.500" cy="9.500" r="7.500" fill="#1d1d1d" stroke="#555" /><circle cx="9.500" cy="9.500" r="4.500" fill="#f01c1c" stroke="none" /></> },
  { name: "Revit", run: "#1f7f96", wide: true, art: <><path d="M3 0h13v18H3z" fill="#1559d6" stroke="none" /><path d="M3 13h13v5H3z" fill="#0b2f86" stroke="none" /><path d="M7.500 11V3.500h2.500a2 2 0 0 1 0 4H7.500M10 7.500l2 3.500" stroke="#fff" strokeWidth="1.500" /><path d="M6 15.500h7" stroke="#b9cdf5" /></> },
  { name: "Foxit PDF", run: "#888", art: <><path d="M2 1h12l3 3v14H2z" fill="#f08a1c" stroke="none" /><path d="M13 5Q8 2 6.500 7.500T11 11.500L12 8H9.500" stroke="#fff" strokeWidth="1.800" /><path d="M5 15.500h9" stroke="#ffdcae" strokeWidth="1.500" /></> },
];

/* ---------- data for the top bars ---------- */

const tabs: [string, number][] = [
  ["File", 30], ["Architecture", 57], ["Structure", 43], ["Steel", 31], ["Precast", 38], ["Systems", 42], ["Insert", 34],
  ["Annotate", 45], ["Analyze", 42], ["Massing & Site", 65], ["Collaborate", 54], ["View", 30], ["Manage", 42],
  ["Add-Ins", 42], ["Enscape™", 47], ["GDTool", 38], ["pyRevit", 40], ["V-Ray", 35], ["Modify", 38],
];

const GlyphText = styled.text`
  font: 700 7px "Liberation Sans", sans-serif;
  text-anchor: middle;
  fill: #333;
  stroke: none;
`;

type Tool = [icon: string, label: string, width: number, menu?: boolean];
const Tools = ({ items }: { items: Tool[] }) => (
  <>
    {items.map(([icon, label, w, menu]) => (
      <BigButton key={label} $w={w}>
        <Svg $w={22} viewBox="0 0 22 22" aria-hidden="true">
          {big[icon]}
          {icon === "spell" && <GlyphText x="11" y="8">ABC</GlyphText>}
          {icon === "find" && <><GlyphText x="16" y="6">A</GlyphText><GlyphText x="4" y="13">A</GlyphText></>}
        </Svg>
        <Label>{label}</Label>
        {menu && <Caret />}
      </BigButton>
    ))}
  </>
);

const Column = ({ w, items, off }: { w: number; items: [string, string][]; off?: string }) => (
  <SmallColumn $w={w}>
    {items.map(([icon, label]) => (
      <SmallButton key={label} disabled={label === off}>
        <Icon name={icon} />{label}{label === "Multi- Rebar" && <Caret />}
      </SmallButton>
    ))}
  </SmallColumn>
);

const quick: [string, number, boolean?][] = [
  ["open", 15], ["save", 16], ["cubeSync", 24, true], ["undo", 24, true], ["redo", 24, true], ["print", 16], ["pdf", 20],
  ["measureDim", 20], ["measure", 24, true], ["alignedSm", 16], ["tagSm", 16], ["textSm", 17], ["house", 27, true],
  ["section", 17], ["thin", 17], ["closeHidden", 25], ["switchWin", 21, true], ["window", 16], ["stack", 16], ["render", 16], ["customize", 12],
];

export default function App() {
  return (
    <>
      <GlobalStyle />
      <Shell>
        <TitleBar>
          <AppBadge>R</AppBadge>
          <ToolSlot $w={19} aria-label="Menu"><Icon name="list" size={11} /></ToolSlot>
          <DocTitle>Autodesk Revit 2023 - 21KT1_Tran Xuan Tuan.rvt - Floor Plan: Tầng 1</DocTitle>
          <TitleTools>
            <ToolSlot $w={10} aria-label="Collapse"><Svg $w={4} $h={6} viewBox="0 0 4 6"><path d="M3.500 0v6L0 3z" fill="#333" stroke="none" /></Svg></ToolSlot>
            <ToolSlot $w={16} aria-label="Search"><Icon name="binoc" /></ToolSlot>
            <UserSlot><Icon name="user" />tuantx</UserSlot>
            <ToolSlot $w={14} aria-label="Account menu"><Caret /></ToolSlot>
            <TrialBadge><Icon name="clock" />23</TrialBadge>
            <ToolSlot $w={18} aria-label="Store"><Icon name="cart" /></ToolSlot>
            <ToolSlot $w={30} aria-label="Help"><Icon name="help" /><Caret /></ToolSlot>
            <ToolSlot $w={16} aria-label="Minimize"><Icon name="minimize" /></ToolSlot>
            <ToolSlot $w={17} aria-label="Restore"><Icon name="restore" size={11} /></ToolSlot>
            <ToolSlot $w={14} aria-label="Close"><Icon name="close" /></ToolSlot>
          </TitleTools>
        </TitleBar>

        <TabBar>
          {tabs.map(([t, w]) => (
            <RibbonTab key={t} $w={w} $kind={t === "File" ? "file" : t === "Annotate" ? "active" : undefined}>{t}</RibbonTab>
          ))}
          <RibbonTab $w={44} aria-label="Ribbon display">
            <Svg $w={18} $h={6} viewBox="0 0 18 6"><rect x="0.500" y="0.500" width="10" height="5" rx="2" fill="#eee" /><path d="M4.500 3h2M14 2h3l-1.500 2z" stroke="#333" /></Svg>
          </RibbonTab>
        </TabBar>

        <Ribbon>
          <Panel $w={38}>
            <PanelBody $pad={5}><BigButton $w={29} $active><Svg $w={22} viewBox="0 0 22 22">{big.modify}</Svg><Label>Modify</Label></BigButton></PanelBody>
            <PanelName>Select <Caret /></PanelName>
          </Panel>
          <Panel $w={288}>
            <PanelBody $pad={3}>
              <Tools items={[["aligned", "Aligned", 28], ["linear", "Linear", 28], ["angular", "Angular", 30], ["radial", "Radial", 28], ["diameter", "Diameter", 34], ["arc", "Arc\nLength", 30], ["elevation", "Spot\nElevation", 36], ["coordinate", "Spot\nCoordinate", 44], ["slope", "Spot\nSlope", 26]]} />
            </PanelBody>
            <PanelName>Dimension <Caret /></PanelName>
          </Panel>
          <Panel $w={233}>
            <PanelBody $pad={1}>
              <Tools items={[["line", "Detail\nLine", 28], ["region", "Region", 36, true], ["component", "Component", 60, true], ["cloud", "Revision\nCloud", 32], ["group", "Detail\nGroup", 37], ["insulation", "Insulation", 35]]} />
            </PanelBody>
            <PanelName>Detail</PanelName>
          </Panel>
          <Panel $w={91}>
            <PanelBody $pad={1}><Tools items={[["text", "Text", 26], ["spell", "Check\nSpelling", 32], ["find", "Find/\nReplace", 30]]} /></PanelBody>
            <PanelName $w={86}>
              <NameSide />Text
              <NameSide><Svg $w={4} viewBox="0 0 4 4"><path d="M0 0l3 3" /><path d="M4 0v4H0z" fill="#333" stroke="none" /></Svg></NameSide>
            </PanelName>
          </Panel>
          <Panel $w={288}>
            <PanelBody $pad={3}>
              <Tools items={[["tagCategory", "Tag by\nCategory", 36], ["tagAll", "Tag\nAll", 26]]} />
              <Column w={87} items={[["beam", "Beam  Annotations"], ["multiCat", "Multi- Category"], ["material", "Material  Tag"]]} />
              <Column w={58} off="Area  Tag" items={[["areaTag", "Area  Tag"], ["roomTag", "Room  Tag"], ["spaceTag", "Space  Tag"]]} />
              <Column w={74} items={[["viewRef", "View  Reference"], ["tread", "Tread  Number"], ["rebar", "Multi- Rebar"]]} />
            </PanelBody>
            <PanelName $w={342}>Tag <Caret /></PanelName>
          </Panel>
          <Panel $w={49}><PanelBody $pad={4}><Tools items={[["keynote", "Keynote", 42, true]]} /></PanelBody></Panel>
          <Panel $w={86}>
            <PanelBody $pad={4}><Column w={80} items={[["duct", "Duct  Legend"], ["pipe", "Pipe  Legend"], ["legend", "Color Fill  Legend"]]} /></PanelBody>
            <PanelName>Color Fill</PanelName>
          </Panel>
          <Panel>
            <PanelBody $pad={0}>
              <Tools items={[["symbol", "Symbol", 34]]} />
              <Column w={74} items={[["span", "Span  Direction"], ["beamSys", "Beam"], ["stair", "Stair  Path"]]} />
              <Column w={50} items={[["area", "Area"], ["path", "Path"], ["fabric", "Fabric"]]} />
            </PanelBody>
            <PanelName $w={148}>Symbol</PanelName>
          </Panel>
        </Ribbon>

        <QuickBar>
          {quick.map(([icon, w, menu]) => (
            <QuickSlot key={icon} $w={w} $on={icon === "thin"} aria-label={icon}>
              <Icon name={icon} />{menu && <Caret />}
            </QuickSlot>
          ))}
        </QuickBar>
        <OptionsBar />

        <Workspace>
          <Browser>
            <DockHeader>Project Browser - 21KT1_Tran Xuan Tuan.rvt<PlainButton aria-label="Close browser"><Icon name="close" /></PlainButton></DockHeader>
            <BrowserBody>
              <Tree>
                {nodes.map((n, k) => (
                  <TreeRow key={k} $current={n.cur}>
                    <TreeGlyph n={n} families={k >= 23} openBranch={k < 15} />
                    <TreeText $current={n.cur}>{n.t}</TreeText>
                  </TreeRow>
                ))}
              </Tree>
              <Rail $w={11} $top={11}><Thumb $h="44%" /></Rail>
            </BrowserBody>
          </Browser>

          <ViewArea>
            <DocTabs>
              <DocTab><Icon name="cube" />{"{3D}"}</DocTab>
              <DocTab $active><Icon name="planTab" />Tầng 1<PushEnd><Icon name="close" /></PushEnd></DocTab>
              <PushEnd><Icon name="customize" /></PushEnd>
            </DocTabs>
            <CanvasRow>
              <CanvasBox>
                <FloorPlanDrawing />
                <NavBar>
                  <Svg $w={22} $h={77} viewBox="0 0 22 77" aria-hidden="true">
                    <g stroke="#8a8f96">
                      <circle cx="17" cy="4" r="2" /><circle cx="17" cy="73" r="2" />
                      <circle cx="10" cy="20" r="6" stroke="#7694ab" /><circle cx="10" cy="20" r="3" stroke="#7694ab" />
                      <path d="M9 34h4l-2 2zM9 62h4l-2 2z" fill="#666" stroke="none" />
                      <path d="M2 38.500h17" stroke="#d8d4c4" />
                      <path d="M5 44l3 3M13 44l-3 3M5 52l3-3" strokeDasharray="2 1" /><circle cx="12" cy="51" r="3" /><path d="M14 53l3 3" />
                    </g>
                    <NavText x="12" y="28">2D</NavText>
                  </Svg>
                </NavBar>
              </CanvasBox>
              <Rail $w={13} $top={252}><Thumb $h="11px" /></Rail>
            </CanvasRow>
            <ViewControls>
              <ScaleButton>1 : 100</ScaleButton>
              {["vcDetail", "vcStyle", "vcSun", "vcShadow", "vcCrop", "vcCropOn", "vcGlasses", "vcBulb", "vcTemp", "vcAnalytic", "vcConstraint"].map((v) => (
                <VcButton key={v} aria-label={v}><Icon name={v} size={11} /></VcButton>
              ))}
              <HThumb />
            </ViewControls>
          </ViewArea>

          <Props>
            <DockHeader>Properties<PlainButton aria-label="Close properties"><Icon name="close" /></PlainButton></DockHeader>
            <TypeSelector>
              <TypeThumb>
                <Svg $w={22} viewBox="0 0 22 22" aria-hidden="true">
                  <path d="M1 1h11v16H1z" fill="#d9e0e5" stroke="#555" /><path d="M12 2h7v6" fill="#e8ecee" stroke="#555" />
                  <path d="M8.500 7.500h12v13h-12z" fill="#eef1f3" stroke="#333" strokeDasharray="1 1" />
                </Svg>
              </TypeThumb>
              Floor Plan
              <Caret />
            </TypeSelector>
            <InstanceRow>
              <SelectBox><Select aria-label="Instance"><option>Floor Plan: Tầng 1</option></Select><Chevron /></SelectBox>
              <EditType><Icon name="type" />Edit Type</EditType>
            </InstanceRow>
            <PropsBody>
              <Grid>
                <colgroup><NameCol /><col /><EndCol /></colgroup>
                <tbody>
                  {groups.map((g) => (
                    <React.Fragment key={g.name}>
                      <tr>
                        <GroupCell colSpan={2}>{g.name}</GroupCell>
                        <GroupCell><Svg $w={6} $h={8} viewBox="0 0 6 8"><path d="M1 3.500L3 1.500l2 2M1 6.500l2-2 2 2" stroke="#222" /></Svg></GroupCell>
                      </tr>
                      {g.rows.map(([name, kind, value]) => (
                        <tr key={name}>
                          <NameCell scope="row" $dim={kind === "dim"}>{name}</NameCell>
                          <ValueCell $dim={kind === "dim"}><Value name={name} kind={kind} value={value} /></ValueCell>
                          <ValueCell />
                        </tr>
                      ))}
                    </React.Fragment>
                  ))}
                </tbody>
              </Grid>
              <Rail $w={12} $top={12}><Thumb $h="88%" /></Rail>
            </PropsBody>
            <PropsFooter><HelpLink href="#help">Properties help</HelpLink><Apply disabled>Apply</Apply></PropsFooter>
          </Props>
        </Workspace>

        <StatusBar>
          <StatusHint>Text Notes : Text : 2.0mm Tahoma</StatusHint>
          <StatusSlot $w={19} aria-label="Worksets"><Icon name="workset" /></StatusSlot>
          <SelectBox $w={136}><Select aria-label="Active workset"><option /></Select><Chevron /></SelectBox>
          <StatusSlot $w={34}><Icon name="funnelGray" />:0</StatusSlot>
          <StatusSlot $w={25} aria-label="Design options"><Icon name="options" /></StatusSlot>
          <StatusSlot $w={16} aria-label="Exclude options"><Icon name="optionsOff" /></StatusSlot>
          <SelectBox $w={136}><Select $dim aria-label="Design option"><option>Main Model</option></Select><Chevron /></SelectBox>
          <StatusTools>
            {["selLinks", "selUnder", "selPin", "selFace", "selDrag", "gear"].map((s) => <StatusSlot key={s} $w={17} aria-label={s}><Icon name={s} /></StatusSlot>)}
            <StatusSlot $w={22}><Icon name="funnel" />:0</StatusSlot>
          </StatusTools>
        </StatusBar>

        <Taskbar>
          <Apps>
            {apps.map((a) => (
              <AppButton key={a.name} aria-label={a.name} $run={a.run} $wide={a.wide}>
                <Svg $w={18} viewBox="0 0 19 19">{a.art}</Svg>
              </AppButton>
            ))}
          </Apps>
          <Tray>
            <TrayItem $w={16} aria-label="Hidden icons"><Svg $w={8} $h={6} viewBox="0 0 8 6"><path d="M1 5l3-4 3 4" stroke="#222" /></Svg></TrayItem>
            <TrayItem $w={16} $c="#f0cd58">77</TrayItem>
            <TrayItem $w={16} $c="#3fa9c9">79</TrayItem>
            <TrayItem $w={16} $c="#4fd6b8">77</TrayItem>
            <TrayItem $w={16} $c="#86d95e">79</TrayItem>
            <TrayItem $w={18} aria-label="Vietnamese input"><Icon name="viet" /></TrayItem>
            <TrayItem $w={20} aria-label="Microphone"><Icon name="mic" size={13} /></TrayItem>
            <TrayItem $w={30}>ENG</TrayItem>
            <TrayItem $w={18} aria-label="Network"><Icon name="wifi" /></TrayItem>
            <TrayItem $w={16} aria-label="Volume"><Icon name="sound" /></TrayItem>
            <TrayItem $w={18} aria-label="Battery"><Icon name="battery" /></TrayItem>
            <Clock>8:16 AM<br />12/19/2022</Clock>
            <TrayItem $w={14} aria-label="Notifications"><Icon name="bell" /></TrayItem>
          </Tray>
        </Taskbar>
      </Shell>
    </>
  );
}
